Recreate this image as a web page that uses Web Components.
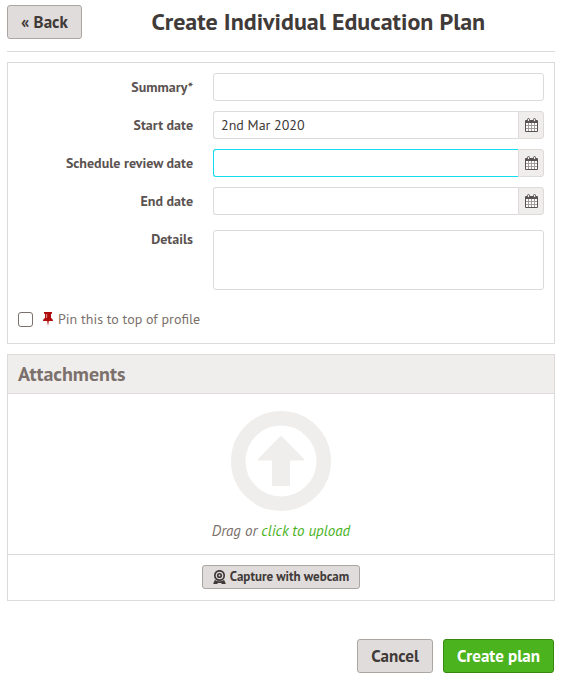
<!DOCTYPE html>
<html lang="en">
<head>
<meta charset="utf-8">
<meta name="viewport" content="width=device-width, initial-scale=1">
<title>Create Individual Education Plan</title>
<style>
  body {
    --line: #dedada;
    --soft: #efeeec;
    --ink: #403a38;
    --label: #5a5250;
    --muted: #7b706c;
    --green: #4ab31d;
    margin: 0;
    background: #fff;
    color: var(--ink);
    font: 14px/20px "PT Sans", Lato, "Open Sans", sans-serif;
  }
</style>
</head>
<body>
<plan-page></plan-page>

<script>
// Base class: each element only provides a render() string for its shadow root.
class BaseElement extends HTMLElement {
  connectedCallback() {
    if (this.shadowRoot) return;
    this.attachShadow({ mode: "open" }).innerHTML = this.render();
  }
}

// <ui-button variant="primary" size="small">
class UiButton extends BaseElement {
  render() {
    return `<style>
      :host { display: inline-block; flex: none; }
      button {
        display: flex; align-items: center; justify-content: center; gap: 4px;
        box-sizing: border-box; height: 34px; padding: 0 13px; margin: 0;
        background: #e0dcdb; color: var(--ink);
        border: 1px solid #aca6a3; border-radius: 3px;
        font: bold 17px/24px "PT Sans", Lato, "Open Sans", sans-serif; cursor: pointer;
      }
      :host([variant="primary"]) button { background: var(--green); border-color: #36880f; color: #fff; }
      :host([size="small"]) button { height: 24px; padding: 0 10px; font-size: 13px; line-height: 20px; }
    </style><button type="button"><slot></slot></button>`;
  }
}

// <page-header> — back button on the left, title centred in what remains
class PageHeader extends BaseElement {
  render() {
    return `<style>
      :host { display: flex; align-items: center; padding-bottom: 12px; border-bottom: 1px solid var(--line); }
      h1 { flex: 1; margin: 0; text-align: center; font-size: 24px; line-height: 34px; }
    </style><slot name="back"></slot><h1><slot></slot></h1>`;
  }
}

const CALENDAR = `<svg width="14" height="14" viewBox="0 0 14 14" aria-hidden="true">
  <rect x="1" y="2" width="13" height="12" rx="1" fill="#5a5250"/>
  <path fill="#fff" d="M2 5h11v8H2z"/>
  <path fill="none" stroke="#a29d9b" d="M4.500 5v8M7.500 5v8M10.500 5v8M2 7.500h11M2 10.500h11"/>
  <rect x="3.500" y=".5" width="2" height="3" rx="1" fill="#efeeec" stroke="#5a5250"/>
  <rect x="9.500" y=".5" width="2" height="3" rx="1" fill="#efeeec" stroke="#5a5250"/>
</svg>`;

// <form-row label="…" kind="text|date|area" value="…" active>
class FormRow extends BaseElement {
  control() {
    const kind = this.getAttribute("kind");
    const value = this.getAttribute("value") || "";
    if (kind === "area") return `<textarea id="field"></textarea>`;
    const input = `<input id="field" type="text" value="${value}">`;
    if (kind !== "date") return input;
    return `${input}<button type="button" aria-label="Choose date">${CALENDAR}</button>`;
  }

  render() {
    return `<style>
      :host { display: grid; grid-template-columns: 175px 1fr; column-gap: 20px; align-items: start; }
      :host([kind="area"]) .control { padding-top: 5px; }
      label { text-align: right; color: var(--label); font-weight: bold; line-height: 28px; }
      .control { display: flex; min-width: 0; }
      input, textarea {
        flex: 1; min-width: 0; box-sizing: border-box; height: 28px; margin: 0; padding: 0 7px;
        border: 1px solid var(--line); border-radius: 3px; background: #fff; color: var(--ink);
        font: 14px/20px "PT Sans", Lato, "Open Sans", sans-serif; outline: none;
      }
      textarea { height: 60px; padding: 4px 7px; resize: none; }
      :host([kind="date"]) input { border-right: 0; border-radius: 3px 0 0 3px; }
      :host([active]) input, input:focus, textarea:focus { border-color: #12dcf0; }
      button {
        display: flex; align-items: center; justify-content: center; box-sizing: border-box;
        width: 26px; height: 28px; padding: 0; background: var(--soft);
        border: 1px solid var(--line); border-radius: 0 3px 3px 0; cursor: pointer;
      }
    </style>
    <label for="field">${this.getAttribute("label")}</label>
    <div class="control">${this.control()}</div>`;
  }
}

// <pin-toggle> — checkbox with a red pin
class PinToggle extends BaseElement {
  render() {
    return `<style>
      :host { display: flex; }
      label { display: flex; align-items: center; color: var(--muted); cursor: pointer; }
      input {
        appearance: none; box-sizing: border-box; width: 15px; height: 15px; margin: 0 10px 0 0;
        border: 1px solid #7b706c; border-radius: 3px; background: #fff;
      }
      input:checked { background: var(--green); }
      svg { margin-right: 5px; }
    </style>
    <label><input type="checkbox">
      <svg width="10" height="14" viewBox="0 0 10 14" aria-hidden="true">
        <path fill="#b00c0c" d="M1 0h8v1.500L8 2v4c1.200.5 2 1.500 2 3H5.800L5 14l-.8-5H0c0-1.500.8-2.500 2-3V2l-1-.5z"/>
        <path fill="#e9b9b9" d="M3.300 2h.8v4h-.8z"/>
      </svg>
      <slot></slot></label>`;
  }
}

// <ui-panel heading="…"> — bordered box, optional heading bar and footer slot
class UiPanel extends BaseElement {
  render() {
    const heading = this.getAttribute("heading");
    return `<style>
      :host { display: block; border: 1px solid var(--line); }
      h2 {
        margin: 0; padding: 7px 10px; background: var(--soft); color: var(--muted);
        border-bottom: 1px solid var(--line); font-size: 20px; line-height: 24px;
      }
      .body { display: flex; flex-direction: column; gap: 10px; padding: 10px; }
    </style>
    ${heading ? `<h2>${heading}</h2>` : ""}
    <div class="body"><slot></slot></div><slot name="footer"></slot>`;
  }
}

class UploadDrop extends BaseElement {
  render() {
    return `<style>
      :host { display: flex; flex-direction: column; align-items: center; gap: 9px; padding: 7px 0 3px; }
      p { margin: 0; color: var(--muted); font-size: 15px; line-height: 21px; font-style: italic; }
      a { color: var(--green); text-decoration: none; }
    </style>
    <svg width="100" height="100" viewBox="0 0 100 100" aria-hidden="true">
      <circle cx="50" cy="50" r="42.750" fill="none" stroke="#efeeec" stroke-width="14.500"/>
      <path fill="#efeeec" stroke="#efeeec" stroke-width="2" stroke-linejoin="round" d="M50 26L72 48.500H58V74H42V48.500H28z"/>
    </svg>
    <p>Drag or <a href="#upload">click to upload</a></p>`;
  }
}

class WebcamBar extends BaseElement {
  render() {
    return `<style>
      :host { display: flex; justify-content: center; padding: 10px 0 11px; border-top: 1px solid var(--line); }
    </style>
    <ui-button size="small">
      <svg width="13" height="14" viewBox="0 0 13 14" aria-hidden="true">
        <circle cx="6.500" cy="5.500" r="4.700" fill="none" stroke="#403a38" stroke-width="1.700"/>
        <circle cx="6.500" cy="5.500" r="2.600" fill="#403a38"/>
        <circle cx="6.500" cy="5.500" r=".9" fill="#e0dcdb"/>
        <path fill="#403a38" d="M2 9.800c2.400 2 6.600 2 9 0l1.700 3.400c.1.400-.1.800-.5.800H9l-1-1H5l-1 1H.8c-.4 0-.6-.4-.5-.8z"/>
      </svg>
      Capture with webcam</ui-button>`;
  }
}

class PlanPage extends BaseElement {
  render() {
    return `<style>
      :host { display: flex; flex-direction: column; gap: 10px; padding: 5px 8px 9px 7px; }
      pin-toggle { padding: 9px 0 4px; }
      footer { display: flex; justify-content: flex-end; gap: 10px; padding: 28px 1px 0 0; }
    </style>
    <page-header><ui-button slot="back">« Back</ui-button>Create Individual Education Plan</page-header>
    <ui-panel>
      <form-row label="Summary*" kind="text"></form-row>
      <form-row label="Start date" kind="date" value="2nd Mar 2020"></form-row>
      <form-row label="Schedule review date" kind="date" active></form-row>
      <form-row label="End date" kind="date"></form-row>
      <form-row label="Details" kind="area"></form-row>
      <pin-toggle>Pin this to top of profile</pin-toggle>
    </ui-panel>
    <ui-panel heading="Attachments">
      <upload-drop></upload-drop>
      <webcam-bar slot="footer"></webcam-bar>
    </ui-panel>
    <footer>
      <ui-button>Cancel</ui-button>
      <ui-button variant="primary">Create plan</ui-button>
    </footer>`;
  }
}

customElements.define("ui-button", UiButton);
customElements.define("page-header", PageHeader);
customElements.define("form-row", FormRow);
customElements.define("pin-toggle", PinToggle);
customElements.define("ui-panel", UiPanel);
customElements.define("upload-drop", UploadDrop);
customElements.define("webcam-bar", WebcamBar);
customElements.define("plan-page", PlanPage);
</script>
</body>
</html>
